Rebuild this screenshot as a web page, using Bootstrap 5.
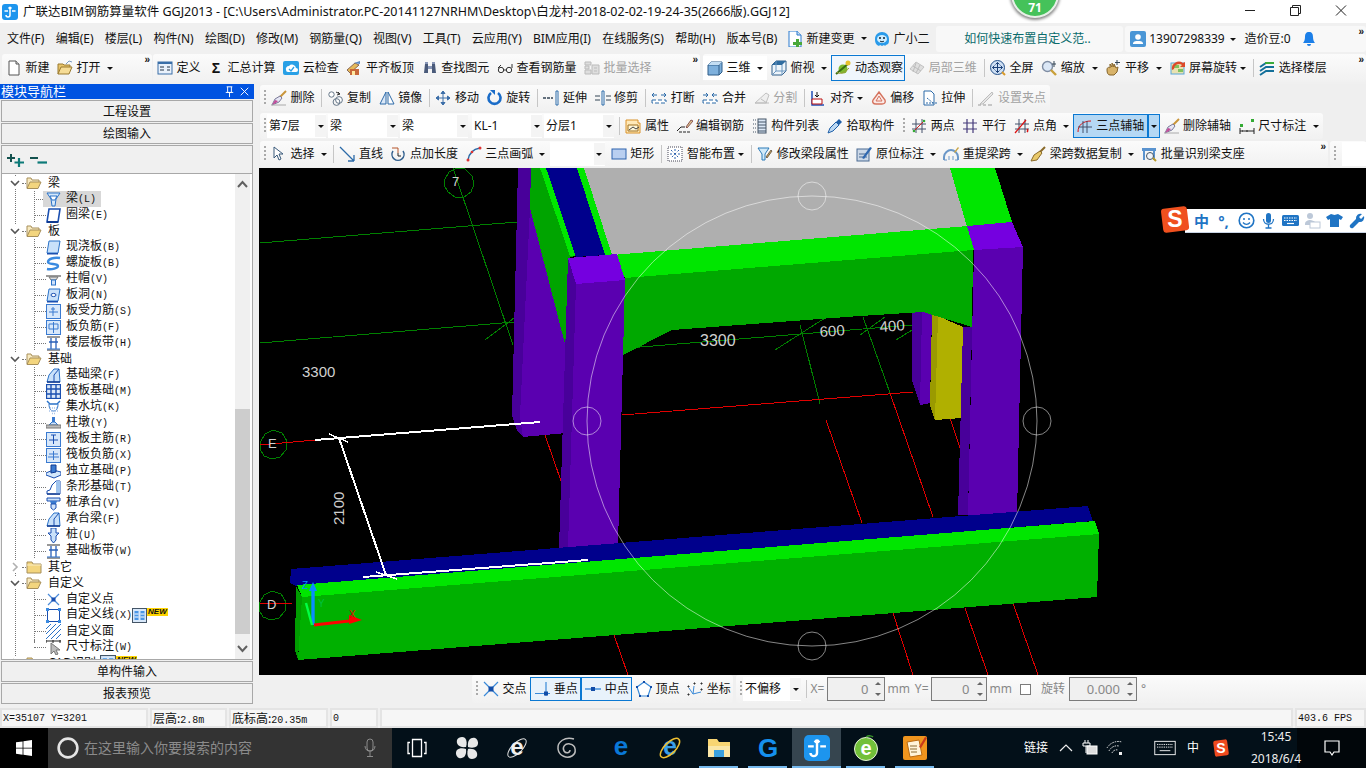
<!DOCTYPE html>
<html lang="zh">
<head>
<meta charset="UTF-8">
<title>GGJ2013</title>
<link href="https://cdn.jsdelivr.net/npm/bootstrap@5.3.0/dist/css/bootstrap.min.css" rel="stylesheet">
<style>
html,body{margin:0;width:1366px;height:768px;overflow:hidden;background:#f0f0f0}
body{font:12px/16px "Noto Sans","Noto Sans CJK SC",sans-serif;color:#111}
.app-shell{width:1366px;height:768px}
.ic{width:16px;height:16px;flex:none;display:block}
.title-row{height:23px;background:#fff;padding-left:2px;overflow:hidden}
.title-txt{margin-left:5px;white-space:nowrap;font-size:12.5px}
.win-btn{width:46px;height:23px}
.score-ball{left:1011px;top:-30px;width:48px;height:48px;border-radius:50%;background:#45c25a;border:2px solid #e8efe8;box-shadow:0 1px 3px 1px #888;color:#fff;font-weight:700;font-size:12px;padding-top:29px;text-align:center;line-height:14px}
.menu-row{height:31px;background:#f0f0f0;white-space:nowrap}
.menu-item{padding:0 5.6px}
.menu-item.first-item{padding-left:7px}
.tab-box{height:26px;background:#f8f8f8;border-radius:3px;margin-top:1px}
.tip-box{width:187px;margin-left:3px;color:#0b6c6c;padding-left:28px}
.user-box{margin-left:2px;flex:1;padding-left:5px;position:relative}
.tool-row{height:30px;background:#f0f0f0;white-space:nowrap}
.bar-row{height:28px;background:#efefef;white-space:nowrap}
.tgroup{height:26px;margin-top:1px;background:linear-gradient(#fbfbfb,#f1f1f1);border-radius:3px;position:relative}
.tool-row .tgroup{height:28px;margin-top:0}
.grp-a{width:150px;margin-left:2px}
.grp-b{width:547px;margin-left:1px}
.grp-c{margin-left:3px}
.gr-edit{width:790px}
.gr-attr{width:1063px}
.gr-draw{width:1068px}
.gr-tail{width:36px;margin-left:2px}
.tail-white{width:24px;height:24px;background:#fff;margin-left:5px}
.tbtn{padding:0 3.8px;gap:3.6px;height:100%;flex:none}
.tbtn.off{color:#a2a2a2}
.tbtn.on{background:#b5d8f4;border:1px solid #0a78d2;padding:0 3px;height:24px;width:75px}
.tool-row .tbtn.on{height:26px;width:74px;background:#f0f6fc}
.tbtn.tri-on{width:12px;padding:0 2px}
.seg-white{background:#fff;height:24px;align-items:center;display:flex}
.tri{width:0;height:0;border:3px solid transparent;border-top:3.5px solid #111;border-bottom:0;flex:none;display:block}
.tri-wrap{padding:0 3.4px 0 2.4px;flex:none}
.tool-row .tri-wrap,.tri-near{padding:0 4px 0 3px}
.tri-near{margin-left:-4px}
.more{position:absolute;right:3px;top:1px;font:700 10px/10px "Liberation Sans",sans-serif;letter-spacing:-1px}
.tsep{width:1px;height:18px;background:#c6c6c6;margin:0 1.5px 0 3px;flex:none}
.tgrip{width:2px;height:16px;margin:0 1px 0 4px;flex:none;background:repeating-linear-gradient(#aaa 0 2px,transparent 2px 4px)}
.tgrip-mid{margin:0 2px 0 5px}
.combo-box{height:24px;background:#fff;margin-right:2px;flex:none}
.combo-arrow{width:11px;background:#f4f4f4;height:22px;flex:none}
.cw59{width:59px}.cw70{width:70px}.cw68{width:68px;margin-right:4px}.cw55{width:55px;margin-left:1px}.cw58{width:58px}
.combo-txt{padding-left:2px}
.nav-panel{width:254px;background:#f0f0f0}
.nav-head{height:15px;background:#0053e1;color:#fff;font-size:13px;line-height:15px;padding-left:1px}
.nav-btn{height:22px;background:#f0f0f0;border:1px solid #a8a8a8;text-align:center;line-height:22px;margin:1px 1px 0 1px;font-size:12px}
.nav-low{height:21px;line-height:20px}
.nav-tools{height:28px;background:#f0f0f0;border:1px solid #a8a8a8;border-bottom:0;margin:1px 1px 0;padding-left:5px;gap:5px}
.tree-wrap{height:487px;background:#fff;border:1px solid #a8a8a8;margin:0 1px;overflow:hidden}
.tree-list{width:232px;padding-top:1px}
.tnode{height:16px;white-space:nowrap;background-repeat:repeat-y;background-size:1px 2px;background-image:linear-gradient(#777 50%,transparent 50%);background-position:13px 0}
.tfold{padding-left:7px}
.tfold .chev{width:12px;height:12px;flex:none;margin-right:1px;background:#fff}
.tfold .dots{width:4px;border-top:1px dotted #777;flex:none}
.tfold .lbl{margin-left:6px}
.tkid{padding-left:32px;background-image:linear-gradient(#777 50%,transparent 50%),linear-gradient(#777 50%,transparent 50%);background-position:13px 0,32px 0;background-size:1px 2px,1px 2px}
.tkid-end{background-size:1px 2px,1px 9px;background-repeat:repeat-y,no-repeat}
.tkid .dots{width:12px;border-top:1px dotted #777;flex:none}
.tkid .ic{width:15px;height:15px}
.lbl{margin-left:5px}
.lbl i{font:10px/16px "Liberation Mono",monospace}
.new-tag{font:italic 700 8px/8px "Liberation Sans",sans-serif;background:#ffd400;color:#111;padding:0 1px;align-self:flex-start;margin-top:1px}
.sel-dots{width:9px !important}
.sel-wrap{background:#d8d8d8;padding-left:3px;padding-right:5px;height:16px}
.scroll-track{width:15px;background:#f0f0f0;margin-right:2px}
.scroll-thumb{height:225px;background:#cdcdcd;margin-top:215px}
.scroll-end{height:20px}
.work-col{padding-left:5px;min-width:0}
.work-bars{padding-left:1px}
.view-wrap{height:507px;background:#000;overflow:hidden}
.view-svg{display:block;width:1107px;height:507px}
.ime-bar{left:901px;top:38px;height:27px}
.ime-logo{width:30px;height:27px;display:block;flex:none;position:relative;z-index:1}
.ime-body{height:24px;background:#fff;width:181px;margin-top:3px;margin-left:-5px;border-bottom:1px solid #c8d4e4;color:#1f74c4;padding-left:9px;gap:5px}
.ime-body b{font-size:15px;line-height:20px}
.ime-body .ime-comma{width:19px;text-align:center}
.ime-body .ic{width:17px;height:17px}
.snap-row{height:30px;background:#f0f0f0;padding-left:213px;white-space:nowrap}
.snap-a{height:28px;margin-top:0;width:261px;flex:none}
.snap-b{height:28px;margin-top:0;margin-left:3px}
.tbtn.snap-on{background:#e8f2fb;border:1px solid #0a78d2;height:24px;padding:0 3px;width:51px}
.num-box{height:24px;border:1px solid #7b7b7b;background:#f0f0f0;color:#888;text-align:right;padding-right:16px;position:relative;line-height:22px;font-size:13px;flex:none}
.nb58{width:58px}.nb56{width:56px}.nb68{width:68px}
.spin-up,.spin-dn{position:absolute;right:3px;width:0;height:0;border:3px solid transparent}
.spin-up{top:4px;border-bottom:3px solid #666;border-top:0}
.spin-dn{bottom:4px;border-top:3px solid #666;border-bottom:0}
.gray-txt{color:#888}
.chk-box{width:11px;height:11px;border:1px solid #7b7b7b;background:#fff;flex:none}
.ml2{margin-left:2px}.ml3{margin-left:3px}.ml4{margin-left:4px}.ml5{margin-left:5px}.ml8{margin-left:8px}.ml10{margin-left:10px}
.stat-row{height:20px;margin-top:3px;background:#f0f0f0;gap:2px}
.stat-cell{height:20px;border:2px solid #e4e4e4;background:#f6f6f6;padding-left:1px;white-space:nowrap;font:10px/17px "Liberation Mono",monospace}
.stat-cell span{font:12px/16px "Noto Sans CJK SC",sans-serif}
.sc1{width:148px}.sc2{width:77px}.sc3{width:99px}.sc4{width:48px}.sc5{flex:1}.sc6{width:71px}
.task-row{height:40px;background:#031019;color:#fff}
.start-btn{width:48px;background:#000}
.search-box{width:344px;background:#333;color:#8b8b8b;font-size:14px;padding-left:9px}
.search-txt{margin-left:5px}
.tb-slot{width:49px;height:40px;position:relative}
.tb-wide{width:50px}
.tb-gap{margin-left:4px}
.tb-slot .ic{width:26px;height:26px;overflow:visible}
.tb-slot.run::after{content:"";position:absolute;left:5px;right:5px;bottom:0;height:2px;background:#76b9ed}
.tb-slot.act{background:#36454f}
.tb-slot.act::after{left:0;right:0}
.tray-ic{width:18px;height:18px;display:block;flex:none}
.mr6{margin-right:6px}.mr7{margin-right:7px}.mr9{margin-right:9px}.mr11{margin-right:11px}.mr13{margin-right:13px}.mr16{margin-right:16px}.mr30{margin-right:30px}
.clock-box{width:60px;text-align:center;line-height:22px;font-size:12px;color:#eee;margin-right:-9px;position:relative;z-index:1}
.note-box{width:69px;background:#01060a;height:40px}
.sig-mark{width:16px;text-align:center;font:700 14px/16px "Liberation Sans",sans-serif}
</style>
</head>
<body>
<svg width="0" height="0" class="position-absolute">
<defs>
<symbol id="i-new" viewBox="0 0 16 16"><path d="M3 1h7l3 3v11H3z" fill="#fff" stroke="#555"/><path d="M10 1v3h3" fill="#ddd" stroke="#555"/></symbol>
<symbol id="i-open" viewBox="0 0 16 16"><path d="M1 14V4h5l1 1h6v2" fill="#e8c46a" stroke="#9a7a30"/><path d="M1 14l3-7h11l-3 7z" fill="#f6dc96" stroke="#9a7a30"/><path d="M9 4l3-3 3 1" fill="none" stroke="#7a9ac0"/></symbol>
<symbol id="i-def" viewBox="0 0 16 16"><rect x="1" y="2" width="14" height="12" fill="#e9f1fb" stroke="#3a6fa8"/><rect x="1" y="2" width="14" height="2" fill="#3a6fa8"/><path d="M3 7h4M3 10h4M10 7h3M10 10h3" stroke="#234" /></symbol>
<symbol id="i-cloud" viewBox="0 0 16 16"><rect x="0" y="1" width="16" height="14" rx="2" fill="#29a0e6"/><path d="M3 10a3 3 0 0 1 3-4 4 4 0 0 1 7 2 2 2 0 0 1 0 4H5a2 2 0 0 1-2-2z" fill="#fff"/><path d="M6 9l2 2 3-4" stroke="#29a0e6" fill="none" stroke-width="1.3"/></symbol>
<symbol id="i-flat" viewBox="0 0 16 16"><path d="M1 10l8-7 4 2-9 8z" fill="#e5b95a" stroke="#865"/><path d="M4 9h9v6H4z" fill="#c8683a"/><path d="M6 11h3v4H6z" fill="#ffe9a0"/><path d="M8 3l6-2v3z" fill="#5b8ac8"/></symbol>
<symbol id="i-binoc" viewBox="0 0 16 16"><path d="M2 13l1-9h3v9zM10 13V4h3l1 9z" fill="#4a5a7a"/><rect x="6" y="6" width="4" height="3" fill="#8a98b8"/><path d="M3 2h3v2H3zM10 2h3v2h-3z" fill="#8a98b8"/></symbol>
<symbol id="i-glass" viewBox="0 0 16 16"><circle cx="4" cy="10" r="2.7" fill="none" stroke="#333"/><circle cx="12" cy="10" r="2.7" fill="none" stroke="#333"/><path d="M6 10h3M1 8l3-3M15 8V4" stroke="#333" fill="none"/></symbol>
<symbol id="i-batch" viewBox="0 0 16 16"><path d="M1 2h6v3H1zM1 6h4v3H1zM1 10h6v4H1zM8 5h7v9H8z" fill="#dedede" stroke="#bbb"/><path d="M10 8h3M10 11h3" stroke="#bbb"/></symbol>
<symbol id="i-cube" viewBox="0 0 16 16"><path d="M1 5l3-3h11v10l-3 3H1z" fill="#7eb0dc" stroke="#2f5c88"/><path d="M1 5h11v10M12 5l3-3" fill="none" stroke="#2f5c88"/><path d="M1 5l3-3h11l-3 3z" fill="#c4def3"/></symbol>
<symbol id="i-cube2" viewBox="0 0 16 16"><path d="M1 5l4-4h10v10l-4 4H1z" fill="#eef5fb" stroke="#2f5c88"/><path d="M1 5l4-4h10l-4 4z" fill="#2f6ca0"/><path d="M11 5v10M5 1v10h10M5 11l-4 4" fill="none" stroke="#6a96bf"/></symbol>
<symbol id="i-orbit" viewBox="0 0 16 16"><circle cx="8" cy="9" r="4.5" fill="#7ebb2e"/><path d="M1 14L14 3" stroke="#3a6e12" stroke-width="2"/><circle cx="13" cy="3" r="2.5" fill="#e6c22e"/><path d="M2 12c2 3 8 1 12-4" stroke="#9b9b3a" fill="none"/></symbol>
<symbol id="i-part" viewBox="0 0 16 16"><path d="M1 9l6-7 8 5-6 7z" fill="#dedede" stroke="#c2c2c2"/><path d="M4 6l8 5M7 3l-3 9M11 5l-4 8" stroke="#bdbdbd"/></symbol>
<symbol id="i-full" viewBox="0 0 16 16"><circle cx="7.5" cy="7.5" r="7" fill="#cfe0f4" stroke="#24518a"/><path d="M7.5 2.5v10M2.5 7.5h10M7.5 2.5l-2 2M7.5 2.5l2 2M7.5 12.5l-2-2M7.5 12.5l2-2M2.5 7.5l2-2M2.5 7.5l2 2M12.5 7.5l-2-2M12.5 7.5l-2 2" stroke="#1a3f77" fill="none"/><path d="M12 12l3 3" stroke="#d99a2a" stroke-width="2"/></symbol>
<symbol id="i-zoom" viewBox="0 0 16 16"><circle cx="6.5" cy="6.5" r="5" fill="#dbe7f6" stroke="#7f8da3" stroke-width="1.4"/><path d="M10 10l5 5" stroke="#c9a03a" stroke-width="2.4"/><path d="M13 1v6M11 4h4" stroke="#345" /></symbol>
<symbol id="i-pan" viewBox="0 0 16 16"><path d="M2 10c0-3 2-3 3-2V4l2 3V3l2 4V4l2 4 2-1-1 5-3 3H5c-2 0-3-2-3-5z" fill="#d8b36a" stroke="#85642a"/><path d="M12 0v5M10 2.5h5" stroke="#345"/></symbol>
<symbol id="i-rot" viewBox="0 0 16 16"><rect x="1" y="3" width="13" height="11" fill="#e9e2b0" stroke="#5aa6d8"/><path d="M3 5h6v3H3zM8 9h5v3H8z" fill="#82c25c"/><path d="M2 10a7 7 0 0 1 11-7l2-1v5h-5l2-2a5 5 0 0 0-8 4" fill="#dd4a2a"/></symbol>
<symbol id="i-floor" viewBox="0 0 16 16"><path d="M1 7l6-4h8M1 11l6-4h8M1 15l6-4h8" fill="none" stroke="#14709a" stroke-width="2"/><path d="M6 3h9" stroke="#3bab3b" stroke-width="2"/></symbol>
<symbol id="i-broom" viewBox="0 0 16 16"><path d="M15 1L8 8" stroke="#c9953a" stroke-width="2"/><path d="M9 6l2 2-3 4-7 3 3-6z" fill="#e6e6f4" stroke="#7a7a9a"/><path d="M1 15l4-2 2-2-3-1z" fill="#c34c9a"/><path d="M0 15h15" stroke="#aaa"/></symbol>
<symbol id="i-copy" viewBox="0 0 16 16"><circle cx="3.5" cy="4.5" r="2.7" fill="#fff" stroke="#678"/><circle cx="11" cy="10" r="3.4" fill="#fff" stroke="#678"/><circle cx="8.5" cy="12" r="3.4" fill="none" stroke="#678"/><path d="M8 2l4 2M12 4l-2-2M12 4l-3 1" stroke="#333" fill="none"/></symbol>
<symbol id="i-mirror" viewBox="0 0 16 16"><path d="M7 2L1 14h6z" fill="#dbe8f7" stroke="#2d6aa8"/><path d="M9 2l6 12H9z" fill="#fff" stroke="#2d6aa8"/></symbol>
<symbol id="i-move" viewBox="0 0 16 16"><path d="M8 1v14M1 8h14M8 1L6 3.5h4zM8 15l-2-2.5h4zM1 8l2.5-2v4zM15 8l-2.5-2v4z" stroke="#3c6ea8" fill="#3c6ea8"/></symbol>
<symbol id="i-turn" viewBox="0 0 16 16"><path d="M4 3a6 6 0 1 0 7 0" fill="none" stroke="#1a6cc8" stroke-width="2.6"/><path d="M3 0h5v5z" fill="#1a6cc8"/></symbol>
<symbol id="i-ext" viewBox="0 0 16 16"><path d="M0 8h10" stroke="#345" stroke-width="1.5" stroke-dasharray="3 1"/><path d="M13 1h2v14h-2z" fill="#fff" stroke="#2b6aa8"/></symbol>
<symbol id="i-trim" viewBox="0 0 16 16"><path d="M7 1h2v14H7z" fill="#fff" stroke="#2b6aa8"/><path d="M0 6h5M0 10h5M11 6h5M11 10h5" stroke="#345"/></symbol>
<symbol id="i-brk" viewBox="0 0 16 16"><path d="M1 5h5M10 5h5M3 3L1 5l2 2M13 3l2 2-2 2" stroke="#2b6aa8" fill="none"/><path d="M1 10h14v3H1z" fill="#fff" stroke="#2b6aa8" stroke-dasharray="4 2"/></symbol>
<symbol id="i-mrg" viewBox="0 0 16 16"><path d="M1 5h5M10 5h5M4 3l2 2-2 2M12 3l-2 2 2 2" stroke="#2b6aa8" fill="none"/><path d="M1 10h14v3H1z" fill="#fff" stroke="#2b6aa8" stroke-dasharray="4 2"/></symbol>
<symbol id="i-spl" viewBox="0 0 16 16"><path d="M1 13L12 3l3 2-3 8z" fill="#eee" stroke="#c0c0c0"/><path d="M1 13h14M7 9l6 4" stroke="#bcbcbc"/></symbol>
<symbol id="i-aln" viewBox="0 0 16 16"><path d="M2 1v14h12" stroke="#2050b8" fill="none" stroke-width="1.5"/><path d="M2 9h10v5H2z" fill="#fff" stroke="#b11"/><path d="M7 2v5M5 5l2 2 2-2" stroke="#111" fill="none"/></symbol>
<symbol id="i-off" viewBox="0 0 16 16"><path d="M8 2l6 8c1 3-1 4-3 4H5c-3 0-4-2-3-4z" fill="#fbe9e6" stroke="#d5735e" stroke-width="1.4"/><path d="M8 6l3 5H5z" fill="none" stroke="#d5735e"/></symbol>
<symbol id="i-str" viewBox="0 0 16 16"><path d="M2 1h7l3 3v11H2z" fill="#fff" stroke="#2d6aa8"/><path d="M5 8l6 5M4 13h11" stroke="#2d6aa8" stroke-dasharray="2 1"/></symbol>
<symbol id="i-grip" viewBox="0 0 16 16"><path d="M2 14l9-9 3-3 1 2-10 10z" fill="#e6e6e6" stroke="#bcbcbc"/><path d="M0 15h3M5 15h3M10 15h4" stroke="#999"/></symbol>
<symbol id="i-prop" viewBox="0 0 16 16"><path d="M1 2h12v3h2v10H1z" fill="#ffe9b8" stroke="#d9922a"/><path d="M3 7h10v6H3z" fill="#fff7d8" stroke="#a07020"/><path d="M4 12l4-3 3 2 3-2" stroke="#444" fill="none"/></symbol>
<symbol id="i-edit" viewBox="0 0 16 16"><path d="M0 13l4-4h4" stroke="#222" fill="none"/><path d="M9 9l5-7 2 1-6 7z" fill="#e1c58a" stroke="#855"/><path d="M2 14h12" stroke="#222" stroke-dasharray="3 1"/></symbol>
<symbol id="i-list" viewBox="0 0 16 16"><rect x="6" y="1" width="8" height="14" fill="#dbe8f7" stroke="#456"/><path d="M6 4h8M6 7h8M6 10h8M6 13h8" stroke="#456"/><path d="M1 2h3M1 6h3M1 10h3M1 14h3" stroke="#456" stroke-dasharray="1 1"/></symbol>
<symbol id="i-pick" viewBox="0 0 16 16"><path d="M1 15l2-5 6-6 3 3-6 6z" fill="#bcd8f2" stroke="#1f5fa8"/><path d="M9 4l3-3 3 3-3 3z" fill="#1f5fa8"/></symbol>
<symbol id="i-two" viewBox="0 0 16 16"><path d="M5 1v14M11 1v14M1 6h14M1 11h14" stroke="#44506a"/><path d="M2 14L14 2" stroke="#c22"/><circle cx="3" cy="13" r="1.3" fill="#3a3"/><circle cx="13" cy="3" r="1.3" fill="#3a3"/></symbol>
<symbol id="i-par" viewBox="0 0 16 16"><path d="M5 1v14M11 1v14M1 5h14M1 11h14" stroke="#443a7a" stroke-width="1.2"/></symbol>
<symbol id="i-ang" viewBox="0 0 16 16"><path d="M5 1v14M11 1v14M1 6h14M1 11h14" stroke="#44506a"/><path d="M1 15L12 2" stroke="#d11" stroke-width="1.2"/><path d="M13 11a2 2 0 0 1 0 3" stroke="#d11" fill="none" stroke-width="1.5"/></symbol>
<symbol id="i-aux" viewBox="0 0 16 16"><path d="M1 14c0-7 5-11 13-11" stroke="#d11" fill="none"/><path d="M6 3v12M10 3v12M1 9h14" stroke="#44506a"/></symbol>
<symbol id="i-dim" viewBox="0 0 16 16"><path d="M1 13h14M1 10v6M15 10v6" stroke="#222"/><rect x="1" y="6" width="3" height="3" fill="#3a3"/><rect x="12" y="1" width="3" height="3" fill="#3a3"/><path d="M3 13h1M7 13h2" stroke="#222"/></symbol>
<symbol id="i-arrow" viewBox="0 0 16 16"><path d="M3 1v11l3-3 2 5 2-1-2-5h4z" fill="#fff" stroke="#3a5a7a"/></symbol>
<symbol id="i-line" viewBox="0 0 16 16"><path d="M1 1l14 14M15 15V9M15 15H9" stroke="#2b6aa8" fill="none" stroke-width="1.3"/></symbol>
<symbol id="i-plus" viewBox="0 0 16 16"><path d="M3 5a6 6 0 1 0 10 0" fill="none" stroke="#32608f" stroke-width="1.5"/><path d="M2 2h6v5" fill="none" stroke="#b5552a"/><path d="M8 7v3h3" stroke="#222" fill="none"/></symbol>
<symbol id="i-arc" viewBox="0 0 16 16"><path d="M2 14C3 7 8 3 14 2" stroke="#2b6aa8" fill="none" stroke-width="1.5"/><circle cx="2" cy="14" r="1.5" fill="#d33"/><circle cx="14" cy="2" r="1.5" fill="#d33"/><circle cx="6" cy="6" r="1.3" fill="#d33"/></symbol>
<symbol id="i-rect" viewBox="0 0 16 16"><rect x="1" y="3" width="14" height="10" fill="#b9cff0" stroke="#2d62ad"/></symbol>
<symbol id="i-smart" viewBox="0 0 16 16"><rect x="1" y="1" width="14" height="14" fill="#fff" stroke="#445" stroke-dasharray="1 1"/><path d="M8 3v10M3 8h10M4 4l8 8M12 4l-8 8" stroke="#2d62ad" stroke-dasharray="2 2"/></symbol>
<symbol id="i-funnel" viewBox="0 0 16 16"><path d="M1 2h11L8 8v6H5V8z" fill="#d2eaf9" stroke="#2b7ab8"/><path d="M9 11l5-7 1 1-5 7z" fill="#c9a648" stroke="#765"/></symbol>
<symbol id="i-insitu" viewBox="0 0 16 16"><rect x="1" y="3" width="12" height="12" fill="#cdd9e8" stroke="#4a6a92"/><path d="M3 8h8M3 11h8" stroke="#4a6a92"/><path d="M6 12L14 1l2 1-8 11z" fill="#3068b0"/></symbol>
<symbol id="i-redo" viewBox="0 0 16 16"><path d="M1 14v-3C1 7 5 4 8 4s7 3 7 7v3" stroke="#6a97c8" stroke-width="2" fill="none"/><path d="M1 14h3M12 14h3M6 14V10M10 14v-4" stroke="#6a97c8"/><path d="M11 6l4-5 1 1-4 5z" fill="#c9a648"/></symbol>
<symbol id="i-brush" viewBox="0 0 16 16"><path d="M15 1l-6 6" stroke="#8a6a2a" stroke-width="2"/><path d="M10 5l2 2-5 7-6 1 3-6z" fill="#e9c96a" stroke="#8a6a2a"/></symbol>
<symbol id="i-batid" viewBox="0 0 16 16"><path d="M1 2h14v3H1z" fill="#5a93cf"/><path d="M3 5v9M13 5v9" stroke="#5a93cf" stroke-width="2"/><circle cx="9" cy="10" r="3.5" fill="#f0f4fa" stroke="#456"/><path d="M12 12l3 3" stroke="#b99a2a" stroke-width="2"/></symbol>
<symbol id="i-x" viewBox="0 0 16 16"><path d="M1 1l14 14M15 1L1 15" stroke="#3a8ad8" stroke-width="1.2"/><rect x="5.5" y="5.5" width="5" height="5" fill="#124da8"/></symbol>
<symbol id="i-perp" viewBox="0 0 16 16"><path d="M12 1v14M1 12.500h15" stroke="#3a8ad8" stroke-width="1.2"/><rect x="10" y="10.500" width="4" height="4" fill="#124da8"/></symbol>
<symbol id="i-midp" viewBox="0 0 16 16"><path d="M0 8h16" stroke="#3a8ad8" stroke-width="1.4"/><rect x="6" y="6" width="4" height="4" fill="#124da8"/></symbol>
<symbol id="i-pent" viewBox="0 0 16 16"><path d="M8 1l7 5-3 9H4L1 6z" fill="#fff" stroke="#3a8ad8" stroke-width="1.2"/><path d="M7 0h2v2H7zM0 5h2v2H0zM14 5h2v2h-2zM3 14h2v2H3zM11 14h2v2h-2z" fill="#124da8"/></symbol>
<symbol id="i-coord" viewBox="0 0 16 16"><path d="M6 13l1-8M6 13l8-2M6 13l-4-6" stroke="#3a8ad8" fill="none"/><path d="M14 2h1v1h-1zM7 2h1v1H7zM1 5h1v1H1zM1 13h1v1H1zM14 8h1v1h-1z" stroke="#222" fill="none"/></symbol>
<symbol id="i-change" viewBox="0 0 16 16"><path d="M2 0h8l4 4v12H2z" fill="#fff" stroke="#2b7ad0"/><path d="M10 0v4h4" fill="#cde" stroke="#2b7ad0"/><path d="M9 8h3v3h3v3h-3v2H9v-2H6v-3h3z" fill="#49a83a"/></symbol>
<symbol id="i-blob" viewBox="0 0 16 16"><path d="M1 8c0-4 3-7 7-7s7 3 7 7c0 2 0 4-1 5l-2 1-1 1-1-1-2 1-2-1-1 1-2-1C1 12 1 10 1 8z" fill="#2a9bea"/><ellipse cx="8" cy="8" rx="5" ry="4" fill="#cfeeff"/><circle cx="6" cy="7" r="1" fill="#123"/><circle cx="10" cy="7" r="1" fill="#123"/><path d="M6 10c1 1 3 1 4 0" stroke="#123" fill="none"/></symbol>
<symbol id="i-user" viewBox="0 0 16 16"><rect width="16" height="16" rx="2" fill="#4a96d6"/><circle cx="8" cy="6" r="2.8" fill="#fff"/><path d="M3 13h10v-1c-1-2-3-2-5-2s-4 0-5 2z" fill="#fff"/></symbol>
<symbol id="i-bell" viewBox="0 0 16 16"><path d="M8 1c3 0 4 2 4 5 0 3 1 5 2 6H2c1-1 2-3 2-6 0-3 1-5 4-5z" fill="#1c7fe8"/><path d="M6 13h4a2 2 0 0 1-4 0z" fill="#1c7fe8"/></symbol>
<symbol id="i-app" viewBox="0 0 16 16"><rect width="16" height="16" rx="3" fill="#1d95ee"/><path d="M8 3v8a2 2 0 0 1-4 0M2.5 7H6M10 7h3.5M8 3l-1.5 1.5M8 3l1.5 1.5" stroke="#fff" stroke-width="1.5" fill="none"/></symbol>
<symbol id="t-beam" viewBox="0 0 15 15"><path d="M1 1h13l-4 6-1 7H6L5 7z" fill="#d4e8fb" stroke="#2a72c8"/><path d="M4 4h7l-2 4H6z" fill="#fff" stroke="#2a72c8"/></symbol>
<symbol id="t-ring" viewBox="0 0 15 15"><path d="M3 1h11l-2 13H1z" fill="#fff" stroke="#1a4fb0" stroke-width="1.6"/><path d="M1 14h11" stroke="#103a90" stroke-width="2"/></symbol>
<symbol id="t-slab" viewBox="0 0 15 15"><path d="M3 1h11l-2 12H1z" fill="#c9e1fa" stroke="#2a72c8"/><path d="M1 13h11v1.5H1z" fill="#1a4fb0"/></symbol>
<symbol id="t-spiral" viewBox="0 0 15 15"><path d="M14 2C8 1 2 3 2 6c0 3 10 1 10 4 0 2-6 4-11 3" fill="none" stroke="#3a8ae0" stroke-width="2.4"/></symbol>
<symbol id="t-cap" viewBox="0 0 15 15"><path d="M0 3h15v2H0z" fill="#9a9a9a"/><path d="M3 5h9l-2 3H5z" fill="#ddd" stroke="#777"/><rect x="5.5" y="8" width="4" height="5" fill="#cfe2fb" stroke="#2a72c8"/></symbol>
<symbol id="t-hole" viewBox="0 0 15 15"><path d="M3 1h11l-2 12H1z" fill="#c9e1fa" stroke="#2a72c8"/><ellipse cx="7.5" cy="7" rx="2.5" ry="1.6" fill="#fff" stroke="#1a4fb0"/><path d="M1 13h11v1.5H1z" fill="#1a4fb0"/></symbol>
<symbol id="t-reb" viewBox="0 0 15 15"><rect x=".5" y=".5" width="14" height="14" fill="#d8e8fa" stroke="#3a7ad0"/><path d="M7 3v9M3 8h9M5 5h4" stroke="#3a7ad0" fill="none"/></symbol>
<symbol id="t-neg" viewBox="0 0 15 15"><rect x=".5" y=".5" width="14" height="14" fill="#d8e8fa" stroke="#3a7ad0"/><path d="M3 4h9v5H3zM7.5 2v11" stroke="#3a7ad0" fill="none"/></symbol>
<symbol id="t-band" viewBox="0 0 15 15"><path d="M1 1h13M1 14h13" stroke="#777" stroke-width="1.4"/><path d="M5 2v11M10 2v11M3 6h9" stroke="#2a60b8" stroke-width="1.3"/><path d="M1 12h13v2H1z" fill="#3a7ad0" opacity=".55"/></symbol>
<symbol id="t-fbeam" viewBox="0 0 15 15"><path d="M1 14l2-7 5-6h5l1 13z" fill="#c9e1fa" stroke="#2a72c8"/><path d="M8 14V7l5-6" stroke="#1a4fb0" fill="none"/><path d="M1 14h13" stroke="#103a90" stroke-width="1.5"/></symbol>
<symbol id="t-raft" viewBox="0 0 15 15"><rect x=".5" y=".5" width="14" height="14" fill="#dce9f9" stroke="#1a4fb0" stroke-width="1.3"/><path d="M5 1v13M10 1v13M1 5h13M1 10h13" stroke="#1a4fb0" stroke-width="1.4"/></symbol>
<symbol id="t-pit" viewBox="0 0 15 15"><path d="M1 1l3 3h7l3-3" stroke="#2a72c8" fill="none" stroke-width="1.4"/><path d="M3 4c0 5 2 7 4.500 7S12 9 12 4" fill="none" stroke="#2a72c8"/><path d="M4 8h7M3 11h9M6 13.500h3" stroke="#a8c4ea" stroke-dasharray="1 1" stroke-width="1.5"/></symbol>
<symbol id="t-pier" viewBox="0 0 15 15"><rect x="6" y="1" width="3" height="5" fill="#3a7ad0"/><path d="M3 9l3-3h3l3 3z" fill="#cfe2fb" stroke="#2a72c8"/><path d="M0 9h15v3H0z" fill="#bbb" stroke="#777"/></symbol>
<symbol id="t-main" viewBox="0 0 15 15"><rect x=".5" y=".5" width="14" height="14" fill="#d8e8fa" stroke="#3a7ad0"/><path d="M3 8h9M7.500 3v9M5 3h5" stroke="#1a4fb0" fill="none"/></symbol>
<symbol id="t-rneg" viewBox="0 0 15 15"><rect x=".5" y=".5" width="14" height="14" fill="#d8e8fa" stroke="#3a7ad0"/><path d="M3 6h9M2 9h11M7.500 3v9" stroke="#3a7ad0" fill="none"/></symbol>
<symbol id="t-iso" viewBox="0 0 15 15"><path d="M0 9l7-3 8 2v3l-7 3-8-3z" fill="#d4e8fb" stroke="#1a4fb0"/><path d="M5 1h5v7l-5 1z" fill="#3a7ad0" stroke="#103a90"/></symbol>
<symbol id="t-strf" viewBox="0 0 15 15"><path d="M1 14v-3l3-1 2-5 4-4h4v13z" fill="#fff" stroke="#1a4fb0"/><path d="M10 1l4 0v13h-4V5z" fill="#9ec3ee"/><path d="M1 14h13" stroke="#103a90" stroke-width="1.4"/></symbol>
<symbol id="t-pcap" viewBox="0 0 15 15"><path d="M1 2h13v3H1z" fill="#c9e1fa" stroke="#1a4fb0"/><path d="M4 5h7l-1 3H5z" fill="#3a7ad0"/><path d="M5 8h5v4l-2.500 2L5 12z" fill="#cfe2fb" stroke="#1a4fb0"/></symbol>
<symbol id="t-pile" viewBox="0 0 15 15"><path d="M5 0h5v5h3l-3 3v4l-2.500 3L5 12V8L2 5h3z" fill="#c9e1fa" stroke="#1a4fb0"/></symbol>
<symbol id="t-cross" viewBox="0 0 15 15"><path d="M2 2l11 11M13 2L2 13" stroke="#4a8ad8" stroke-width="1.2"/><rect x="5.500" y="5.500" width="4" height="4" fill="#1a4fb0"/></symbol>
<symbol id="t-box" viewBox="0 0 15 15"><rect x="1.500" y="1.500" width="12" height="12" fill="#fff" stroke="#1a4fb0"/><path d="M0 0h3v3H0zM12 0h3v3h-3zM0 12h3v3H0zM12 12h3v3h-3z" fill="#3a8ae0"/></symbol>
<symbol id="t-hatch" viewBox="0 0 15 15"><path d="M0 5l5-5M0 10L10 0M0 15L15 0M5 15L15 5M10 15l5-5" stroke="#2a72c8"/></symbol>
<symbol id="t-dimx" viewBox="0 0 15 15"><path d="M0 1h15M0 0v3M7 0v3M14 0v3" stroke="#222"/><path d="M5 3v11l3-3 2 4 2-1-2-4h4z" fill="#bbb" stroke="#777"/></symbol>
<symbol id="t-cols" viewBox="0 0 15 15"><rect x=".5" y=".5" width="14" height="14" fill="#d8e8fa" stroke="#456"/><path d="M2.500 3h4v9h-4zM8.500 3h4v9h-4z" fill="#4a96e6"/><path d="M2.500 6h4M2.500 9h4M8.500 6h4M8.500 9h4" stroke="#fff"/></symbol>
<symbol id="fold-open" viewBox="0 0 16 16"><path d="M1 13V3h4l1 2h7v2" fill="#f8eac0" stroke="#a78f5a"/><path d="M1 13.500L4 7h11l-3 6.500z" fill="#f3d57e" stroke="#a78f5a"/></symbol>
<symbol id="fold-shut" viewBox="0 0 16 16"><path d="M1 3h5l1 2h8v9H1z" fill="#f3d57e" stroke="#a78f5a"/><path d="M1 6h14" stroke="#fbeec4"/></symbol>
<symbol id="chev-d" viewBox="0 0 12 12"><path d="M2 4l4 4 4-4" stroke="#555" stroke-width="1.6" fill="none"/></symbol>
<symbol id="chev-r" viewBox="0 0 12 12"><path d="M4 2l4 4-4 4" stroke="#b0b0b0" stroke-width="1.6" fill="none"/></symbol>
</defs>
</svg>

<div class="app-shell d-flex flex-column position-relative">

  <!-- title bar -->
  <div class="title-row d-flex align-items-center position-relative">
    <svg class="ic"><use href="#i-app"/></svg>
    <span class="title-txt flex-grow-1">广联达BIM钢筋算量软件 GGJ2013 - [C:\Users\Administrator.PC-20141127NRHM\Desktop\白龙村-2018-02-02-19-24-35(2666版).GGJ12]</span>
    <div class="score-ball position-absolute">71</div>
    <svg class="win-btn" viewBox="0 0 46 23"><path d="M17 10.500h10" stroke="#222"/></svg>
    <svg class="win-btn" viewBox="0 0 46 23"><path d="M16.500 7.500h8v8h-8zM18.500 7V5.500h8v8H25" fill="none" stroke="#222"/></svg>
    <svg class="win-btn" viewBox="0 0 46 23"><path d="M16 5.500l10 10M26 5.500l-10 10" stroke="#222"/></svg>
  </div>

  <!-- menu -->
  <div class="menu-row d-flex align-items-center">
    <span class="menu-item first-item">文件(F)</span><span class="menu-item">编辑(E)</span><span class="menu-item">楼层(L)</span><span class="menu-item">构件(N)</span><span class="menu-item">绘图(D)</span><span class="menu-item">修改(M)</span><span class="menu-item">钢筋量(Q)</span><span class="menu-item">视图(V)</span><span class="menu-item">工具(T)</span><span class="menu-item">云应用(Y)</span><span class="menu-item">BIM应用(I)</span><span class="menu-item">在线服务(S)</span><span class="menu-item">帮助(H)</span><span class="menu-item">版本号(B)</span>
    <div class="tbtn d-flex align-items-center"><svg class="ic"><use href="#i-change"/></svg><span>新建变更</span></div>
    <div class="tri-wrap"><span class="tri"></span></div>
    <div class="tbtn d-flex align-items-center"><svg class="ic"><use href="#i-blob"/></svg><span>广小二</span></div>
    <div class="tab-box tip-box d-flex align-items-center">如何快速布置自定义范..</div>
    <div class="tab-box user-box d-flex align-items-center">
      <svg class="ic"><use href="#i-user"/></svg><span class="ml3">13907298339</span>
      <div class="tri-wrap ml3"><span class="tri"></span></div>
      <span class="ml5">造价豆:0</span>
      <svg class="ic ml10"><use href="#i-bell"/></svg>
      <span class="more">»</span>
    </div>
  </div>

  <!-- main toolbar -->
  <div class="tool-row d-flex">
    <div class="tgroup grp-a d-flex align-items-center">
      <div class="tbtn d-flex align-items-center"><svg class="ic"><use href="#i-new"/></svg><span>新建</span></div>
      <div class="tbtn d-flex align-items-center"><svg class="ic"><use href="#i-open"/></svg><span>打开</span></div>
      <div class="tri-wrap"><span class="tri"></span></div>
      <span class="more">»</span>
    </div>
    <div class="tgroup grp-b d-flex align-items-center">
      <div class="tbtn d-flex align-items-center"><svg class="ic"><use href="#i-def"/></svg><span>定义</span></div>
      <div class="tbtn d-flex align-items-center"><b class="sig-mark">Σ</b><span>汇总计算</span></div>
      <div class="tbtn d-flex align-items-center"><svg class="ic"><use href="#i-cloud"/></svg><span>云检查</span></div>
      <div class="tbtn d-flex align-items-center"><svg class="ic"><use href="#i-flat"/></svg><span>平齐板顶</span></div>
      <div class="tbtn d-flex align-items-center"><svg class="ic"><use href="#i-binoc"/></svg><span>查找图元</span></div>
      <div class="tbtn d-flex align-items-center"><svg class="ic"><use href="#i-glass"/></svg><span>查看钢筋量</span></div>
      <div class="tbtn off d-flex align-items-center"><svg class="ic"><use href="#i-batch"/></svg><span>批量选择</span></div>
      <span class="more">»</span>
    </div>
    <div class="tgroup grp-c d-flex align-items-center flex-grow-1">
      <div class="tbtn seg-white"><svg class="ic"><use href="#i-cube"/></svg><span>三维</span></div>
      <div class="tri-wrap seg-white"><span class="tri"></span></div>
      <div class="tbtn d-flex align-items-center"><svg class="ic"><use href="#i-cube2"/></svg><span>俯视</span></div>
      <div class="tri-wrap"><span class="tri"></span></div>
      <div class="tbtn on d-flex align-items-center"><svg class="ic"><use href="#i-orbit"/></svg><span>动态观察</span></div>
      <div class="tbtn off d-flex align-items-center"><svg class="ic"><use href="#i-part"/></svg><span>局部三维</span></div>
      <span class="tsep"></span>
      <div class="tbtn d-flex align-items-center"><svg class="ic"><use href="#i-full"/></svg><span>全屏</span></div>
      <div class="tbtn d-flex align-items-center"><svg class="ic"><use href="#i-zoom"/></svg><span>缩放</span></div>
      <div class="tri-wrap"><span class="tri"></span></div>
      <div class="tbtn d-flex align-items-center"><svg class="ic"><use href="#i-pan"/></svg><span>平移</span></div>
      <div class="tri-wrap"><span class="tri"></span></div>
      <div class="tbtn d-flex align-items-center"><svg class="ic"><use href="#i-rot"/></svg><span>屏幕旋转</span></div>
      <div class="tri-wrap tri-near"><span class="tri"></span></div>
      <span class="tsep"></span>
      <div class="tbtn d-flex align-items-center"><svg class="ic"><use href="#i-floor"/></svg><span>选择楼层</span></div>
      <span class="more">»</span>
    </div>
  </div>

  <!-- middle -->
  <div class="d-flex">
    <div class="nav-panel d-flex flex-column">
      <div class="nav-head d-flex align-items-center justify-content-between">模块导航栏
        <svg width="34" height="15" viewBox="0 0 34 16"><path d="M6 3h6M7 3v6h4V3M5 9h8M9 9v5" stroke="#fff" fill="none"/><path d="M21 4l8 8M29 4l-8 8" stroke="#fff"/></svg>
      </div>
      <div class="nav-btn">工程设置</div>
      <div class="nav-btn nav-low">绘图输入</div>
      <div class="nav-tools d-flex align-items-center">
        <svg width="18" height="16" viewBox="0 0 18 16"><path d="M4 2v8M0 6h8" stroke="#14524f" stroke-width="2"/><path d="M12 6v9M7.500 10.500H17" stroke="#0d7a78" stroke-width="2.200"/></svg>
        <svg width="18" height="16" viewBox="0 0 18 16"><path d="M0 6h8" stroke="#14524f" stroke-width="2"/><path d="M7.500 10.500H17" stroke="#0d7a78" stroke-width="2.200"/></svg>
      </div>
      <div class="tree-wrap d-flex">
        <div class="tree-list flex-grow-1">
          <div class="tnode tfold d-flex align-items-center"><svg class="chev"><use href="#chev-d"/></svg><span class="dots"></span><svg class="ic"><use href="#fold-open"/></svg><span class="lbl">梁</span></div>
          <div class="tnode tkid d-flex align-items-center"><span class="dots sel-dots"></span><span class="sel-wrap d-flex align-items-center"><svg class="ic"><use href="#t-beam"/></svg><span class="lbl">梁<i>(L)</i></span></span></div>
          <div class="tnode tkid d-flex align-items-center"><span class="dots"></span><svg class="ic"><use href="#t-ring"/></svg><span class="lbl">圈梁<i>(E)</i></span></div>
          <div class="tnode tfold d-flex align-items-center"><svg class="chev"><use href="#chev-d"/></svg><span class="dots"></span><svg class="ic"><use href="#fold-open"/></svg><span class="lbl">板</span></div>
          <div class="tnode tkid d-flex align-items-center"><span class="dots"></span><svg class="ic"><use href="#t-slab"/></svg><span class="lbl">现浇板<i>(B)</i></span></div>
          <div class="tnode tkid d-flex align-items-center"><span class="dots"></span><svg class="ic"><use href="#t-spiral"/></svg><span class="lbl">螺旋板<i>(B)</i></span></div>
          <div class="tnode tkid d-flex align-items-center"><span class="dots"></span><svg class="ic"><use href="#t-cap"/></svg><span class="lbl">柱帽<i>(V)</i></span></div>
          <div class="tnode tkid d-flex align-items-center"><span class="dots"></span><svg class="ic"><use href="#t-hole"/></svg><span class="lbl">板洞<i>(N)</i></span></div>
          <div class="tnode tkid d-flex align-items-center"><span class="dots"></span><svg class="ic"><use href="#t-reb"/></svg><span class="lbl">板受力筋<i>(S)</i></span></div>
          <div class="tnode tkid d-flex align-items-center"><span class="dots"></span><svg class="ic"><use href="#t-neg"/></svg><span class="lbl">板负筋<i>(F)</i></span></div>
          <div class="tnode tkid d-flex align-items-center"><span class="dots"></span><svg class="ic"><use href="#t-band"/></svg><span class="lbl">楼层板带<i>(H)</i></span></div>
          <div class="tnode tfold d-flex align-items-center"><svg class="chev"><use href="#chev-d"/></svg><span class="dots"></span><svg class="ic"><use href="#fold-open"/></svg><span class="lbl">基础</span></div>
          <div class="tnode tkid d-flex align-items-center"><span class="dots"></span><svg class="ic"><use href="#t-fbeam"/></svg><span class="lbl">基础梁<i>(F)</i></span></div>
          <div class="tnode tkid d-flex align-items-center"><span class="dots"></span><svg class="ic"><use href="#t-raft"/></svg><span class="lbl">筏板基础<i>(M)</i></span></div>
          <div class="tnode tkid d-flex align-items-center"><span class="dots"></span><svg class="ic"><use href="#t-pit"/></svg><span class="lbl">集水坑<i>(K)</i></span></div>
          <div class="tnode tkid d-flex align-items-center"><span class="dots"></span><svg class="ic"><use href="#t-pier"/></svg><span class="lbl">柱墩<i>(Y)</i></span></div>
          <div class="tnode tkid d-flex align-items-center"><span class="dots"></span><svg class="ic"><use href="#t-main"/></svg><span class="lbl">筏板主筋<i>(R)</i></span></div>
          <div class="tnode tkid d-flex align-items-center"><span class="dots"></span><svg class="ic"><use href="#t-rneg"/></svg><span class="lbl">筏板负筋<i>(X)</i></span></div>
          <div class="tnode tkid d-flex align-items-center"><span class="dots"></span><svg class="ic"><use href="#t-iso"/></svg><span class="lbl">独立基础<i>(P)</i></span></div>
          <div class="tnode tkid d-flex align-items-center"><span class="dots"></span><svg class="ic"><use href="#t-strf"/></svg><span class="lbl">条形基础<i>(T)</i></span></div>
          <div class="tnode tkid d-flex align-items-center"><span class="dots"></span><svg class="ic"><use href="#t-pcap"/></svg><span class="lbl">桩承台<i>(V)</i></span></div>
          <div class="tnode tkid d-flex align-items-center"><span class="dots"></span><svg class="ic"><use href="#t-fbeam"/></svg><span class="lbl">承台梁<i>(F)</i></span></div>
          <div class="tnode tkid d-flex align-items-center"><span class="dots"></span><svg class="ic"><use href="#t-pile"/></svg><span class="lbl">桩<i>(U)</i></span></div>
          <div class="tnode tkid d-flex align-items-center"><span class="dots"></span><svg class="ic"><use href="#t-band"/></svg><span class="lbl">基础板带<i>(W)</i></span></div>
          <div class="tnode tfold d-flex align-items-center"><svg class="chev"><use href="#chev-r"/></svg><span class="dots"></span><svg class="ic"><use href="#fold-shut"/></svg><span class="lbl">其它</span></div>
          <div class="tnode tfold d-flex align-items-center"><svg class="chev"><use href="#chev-d"/></svg><span class="dots"></span><svg class="ic"><use href="#fold-open"/></svg><span class="lbl">自定义</span></div>
          <div class="tnode tkid d-flex align-items-center"><span class="dots"></span><svg class="ic"><use href="#t-cross"/></svg><span class="lbl">自定义点</span></div>
          <div class="tnode tkid d-flex align-items-center"><span class="dots"></span><svg class="ic"><use href="#t-box"/></svg><span class="lbl">自定义线<i>(X)</i></span><svg class="ic ms-0"><use href="#t-cols"/></svg><span class="new-tag">NEW</span></div>
          <div class="tnode tkid d-flex align-items-center"><span class="dots"></span><svg class="ic"><use href="#t-hatch"/></svg><span class="lbl">自定义面</span></div>
          <div class="tnode tkid tkid-end d-flex align-items-center"><span class="dots"></span><svg class="ic"><use href="#t-dimx"/></svg><span class="lbl">尺寸标注<i>(W)</i></span></div>
          <div class="tnode tfold d-flex align-items-center"><svg class="chev"><use href="#chev-r"/></svg><span class="dots"></span><svg class="ic"><use href="#fold-shut"/></svg><span class="lbl">CAD识别</span><svg class="ic ml4"><use href="#t-cols"/></svg><span class="new-tag">NEW</span></div>
        </div>
        <div class="scroll-track d-flex flex-column">
          <div class="scroll-end d-flex align-items-center justify-content-center"><svg width="11" height="8" viewBox="0 0 11 8"><path d="M1 7l4.500-5L10 7" stroke="#606060" stroke-width="2" fill="none"/></svg></div>
          <div class="scroll-thumb"></div>
          <div class="scroll-end mt-auto d-flex align-items-center justify-content-center"><svg width="11" height="8" viewBox="0 0 11 8"><path d="M1 1l4.500 5L10 1" stroke="#606060" stroke-width="2" fill="none"/></svg></div>
        </div>
      </div>
      <div class="nav-btn nav-low">单构件输入</div>
      <div class="nav-btn nav-low">报表预览</div>
    </div>

    <div class="work-col flex-grow-1">
      <div class="bar-row d-flex work-bars">
        <div class="tgroup d-flex align-items-center gr-edit">
          <span class="tgrip"></span>
          <div class="tbtn d-flex align-items-center"><svg class="ic"><use href="#i-broom"/></svg><span>删除</span></div><span class="tsep"></span>
          <div class="tbtn d-flex align-items-center"><svg class="ic"><use href="#i-copy"/></svg><span>复制</span></div>
          <div class="tbtn d-flex align-items-center"><svg class="ic"><use href="#i-mirror"/></svg><span>镜像</span></div><span class="tsep"></span>
          <div class="tbtn d-flex align-items-center"><svg class="ic"><use href="#i-move"/></svg><span>移动</span></div>
          <div class="tbtn d-flex align-items-center"><svg class="ic"><use href="#i-turn"/></svg><span>旋转</span></div><span class="tsep"></span>
          <div class="tbtn d-flex align-items-center"><svg class="ic"><use href="#i-ext"/></svg><span>延伸</span></div>
          <div class="tbtn d-flex align-items-center"><svg class="ic"><use href="#i-trim"/></svg><span>修剪</span></div><span class="tsep"></span>
          <div class="tbtn d-flex align-items-center"><svg class="ic"><use href="#i-brk"/></svg><span>打断</span></div>
          <div class="tbtn d-flex align-items-center"><svg class="ic"><use href="#i-mrg"/></svg><span>合并</span></div>
          <div class="tbtn off d-flex align-items-center"><svg class="ic"><use href="#i-spl"/></svg><span>分割</span></div><span class="tsep"></span>
          <div class="tbtn d-flex align-items-center"><svg class="ic"><use href="#i-aln"/></svg><span>对齐</span></div><div class="tri-wrap tri-near"><span class="tri"></span></div>
          <div class="tbtn d-flex align-items-center"><svg class="ic"><use href="#i-off"/></svg><span>偏移</span></div>
          <div class="tbtn d-flex align-items-center"><svg class="ic"><use href="#i-str"/></svg><span>拉伸</span></div><span class="tsep"></span>
          <div class="tbtn off d-flex align-items-center"><svg class="ic"><use href="#i-grip"/></svg><span>设置夹点</span></div>
        </div>
      </div>
      <div class="bar-row d-flex work-bars">
        <div class="tgroup d-flex align-items-center gr-attr">
          <span class="tgrip"></span>
          <div class="combo-box cw59 d-flex align-items-center justify-content-between"><span class="combo-txt">第7层</span><span class="combo-arrow d-flex align-items-center justify-content-center"><span class="tri"></span></span></div>
          <div class="combo-box cw70 d-flex align-items-center justify-content-between"><span class="combo-txt">梁</span><span class="combo-arrow d-flex align-items-center justify-content-center"><span class="tri"></span></span></div>
          <div class="combo-box cw68 d-flex align-items-center justify-content-between"><span class="combo-txt">梁</span><span class="combo-arrow d-flex align-items-center justify-content-center"><span class="tri"></span></span></div>
          <div class="combo-box cw70 d-flex align-items-center justify-content-between"><span class="combo-txt">KL-1</span><span class="combo-arrow d-flex align-items-center justify-content-center"><span class="tri"></span></span></div>
          <div class="combo-box cw70 d-flex align-items-center justify-content-between"><span class="combo-txt">分层1</span><span class="combo-arrow d-flex align-items-center justify-content-center"><span class="tri"></span></span></div>
          <span class="tsep"></span>
          <div class="tbtn d-flex align-items-center"><svg class="ic"><use href="#i-prop"/></svg><span>属性</span></div>
          <div class="tbtn d-flex align-items-center"><svg class="ic"><use href="#i-edit"/></svg><span>编辑钢筋</span></div>
          <div class="tbtn d-flex align-items-center"><svg class="ic"><use href="#i-list"/></svg><span>构件列表</span></div>
          <div class="tbtn d-flex align-items-center"><svg class="ic"><use href="#i-pick"/></svg><span>拾取构件</span></div>
          <span class="tgrip tgrip-mid"></span>
          <div class="tbtn d-flex align-items-center"><svg class="ic"><use href="#i-two"/></svg><span>两点</span></div>
          <div class="tbtn d-flex align-items-center"><svg class="ic"><use href="#i-par"/></svg><span>平行</span></div>
          <div class="tbtn d-flex align-items-center"><svg class="ic"><use href="#i-ang"/></svg><span>点角</span></div>
          <div class="tri-wrap"><span class="tri"></span></div>
          <div class="tbtn on d-flex align-items-center"><svg class="ic"><use href="#i-aux"/></svg><span>三点辅轴</span></div>
          <div class="tbtn on tri-on d-flex align-items-center"><span class="tri"></span></div>
          <div class="tbtn d-flex align-items-center"><svg class="ic"><use href="#i-broom"/></svg><span>删除辅轴</span></div>
          <div class="tbtn d-flex align-items-center"><svg class="ic"><use href="#i-dim"/></svg><span>尺寸标注</span></div>
          <div class="tri-wrap"><span class="tri"></span></div>
        </div>
      </div>
      <div class="bar-row d-flex work-bars">
        <div class="tgroup d-flex align-items-center gr-draw">
          <span class="tgrip"></span>
          <div class="tbtn d-flex align-items-center"><svg class="ic"><use href="#i-arrow"/></svg><span>选择</span></div><div class="tri-wrap"><span class="tri"></span></div><span class="tsep"></span>
          <div class="tbtn d-flex align-items-center"><svg class="ic"><use href="#i-line"/></svg><span>直线</span></div>
          <div class="tbtn d-flex align-items-center"><svg class="ic"><use href="#i-plus"/></svg><span>点加长度</span></div>
          <div class="tbtn d-flex align-items-center"><svg class="ic"><use href="#i-arc"/></svg><span>三点画弧</span></div><div class="tri-wrap"><span class="tri"></span></div>
          <div class="combo-box cw55 d-flex align-items-center justify-content-end"><span class="combo-arrow d-flex align-items-center justify-content-center"><span class="tri"></span></span></div>
          <div class="tbtn d-flex align-items-center"><svg class="ic"><use href="#i-rect"/></svg><span>矩形</span></div><span class="tsep"></span>
          <div class="tbtn d-flex align-items-center"><svg class="ic"><use href="#i-smart"/></svg><span>智能布置</span></div><div class="tri-wrap tri-near"><span class="tri"></span></div><span class="tsep"></span>
          <div class="tbtn d-flex align-items-center"><svg class="ic"><use href="#i-funnel"/></svg><span>修改梁段属性</span></div>
          <div class="tbtn d-flex align-items-center"><svg class="ic"><use href="#i-insitu"/></svg><span>原位标注</span></div><div class="tri-wrap"><span class="tri"></span></div>
          <div class="tbtn d-flex align-items-center"><svg class="ic"><use href="#i-redo"/></svg><span>重提梁跨</span></div><div class="tri-wrap"><span class="tri"></span></div>
          <div class="tbtn d-flex align-items-center"><svg class="ic"><use href="#i-brush"/></svg><span>梁跨数据复制</span></div><div class="tri-wrap"><span class="tri"></span></div>
          <div class="tbtn d-flex align-items-center"><svg class="ic"><use href="#i-batid"/></svg><span>批量识别梁支座</span></div>
          <span class="more">»</span>
        </div>
        <div class="tgroup gr-tail d-flex align-items-center"><span class="tgrip"></span><span class="tail-white"></span></div>
      </div>

      <!-- 3D view -->
      <div class="view-wrap position-relative">
        <svg class="view-svg" viewBox="259 168 1107 507" shape-rendering="crispEdges">
          <g fill="none" stroke="#008000">
            <path d="M260 243L517 222M260 343L514 322M453 168L513 345M485 340L514 318M863 317L890 393M860 335L885 317M896 340L912 330M775 350L825 318M628 348L912 325M800 325L820 404"/>
            <path d="M444 181l5-9 8-4 8 1 7 7 2 8-3 8-7 5h-9l-7-5-4-7zM260 443l5-9 8-4 9 3 5 8-1 9-6 7-8 2-8-3-4-7zM259 604l5-9 8-4 9 3 5 8-1 9-6 7-8 2-8-3-4-7z"/>
          </g>
          <g fill="none" stroke="#e00000">
            <path d="M260 445L315 440M622 415L913 392M260 604L293 603M545 435L561 481M614 635L628 675M826 420L862 523M893 613L913 675M890 393L933 517M965 608L988 675M944 400L960 448M1013 603L1038 675"/>
          </g>
          <polygon points="912,312 932,312 930,403 920,405 912,380" fill="#5a00b0"/>
          <polygon points="912,312 922,312 920,405 912,380" fill="#48009a"/>
          <polygon points="938,316 963,327 961,418 935,420" fill="#b0b000"/>
          <polygon points="932,314 938,316 935,420 930,405" fill="#9a9a00"/>
          <polygon points="963,327 972,327 968,515 958,515" fill="#48009a"/>
          <polygon points="518,168 531,168 530,208 520,416 523,437 517,430 512,416" fill="#48009a"/>
          <polygon points="530,208 566,348 566,433 523,437 520,416" fill="#5a00b0"/>
          <polygon points="531,168 540,168 575,256 568,258 566,348 530,208" fill="#00a400"/>
          <polygon points="540,168 546,168 576,256 570,256" fill="#00e600"/>
          <polygon points="546,168 577,168 605,255 576,257" fill="#00008c"/>
          <polygon points="577,168 584,168 612,255 605,255" fill="#00e600"/>
          <polygon points="584,168 950,168 968,226 612,255" fill="#afafaf"/>
          <polygon points="950,168 995,168 1012,222 967,227" fill="#00e600"/>
          <polygon points="612,255 968,226 975,250 625,278" fill="#00e600"/>
          <polygon points="625,278 973,250 972,327 923,312 860,316 672,330 623,355" fill="#00a800"/>
          <polygon points="568,258 576,284 568,548 559,548" fill="#48009a"/>
          <polygon points="576,284 625,280 618,545 568,548" fill="#5a00b0"/>
          <polygon points="568,258 617,254 625,280 576,284" fill="#7500e0"/>
          <polygon points="974,250 1023,247 1017,516 968,516" fill="#5a00b0"/>
          <polygon points="967,226 1012,222 1023,247 974,250" fill="#7500e0"/>
          <polygon points="291,569 1088,506 1093,521 296,586 290,583" fill="#00008c"/>
          <polygon points="297,585 1095,521 1099,534 302,597" fill="#00e600"/>
          <polygon points="296,586 302,597 298,659 295,650" fill="#009c00"/>
          <polygon points="302,597 1099,534 1097,597 298,660" fill="#00b000"/>
          <g fill="none" stroke="#fff" stroke-width="2">
            <path d="M315 440L540 422M339 438L386 575M363 577L588 560"/>
            <path d="M329 434L348 442M376 572L397 579" stroke-width="1.400"/>
          </g>
          <g shape-rendering="auto">
            <path d="M313 625V590" stroke="#0a8cff" stroke-width="3.400"/><path d="M313 582l4 9h-8z" fill="#0a8cff"/>
            <path d="M312 625l-6-22" stroke="#00ff44" stroke-width="2.400"/>
            <path d="M314 625l35-4" stroke="#ff0000" stroke-width="3"/><path d="M362 620l-13-5v9z" fill="#ff0000"/>
            <circle cx="812" cy="421" r="225" fill="none" stroke="#fff" stroke-opacity=".52"/>
            <g fill="none" stroke="#fff" stroke-opacity=".52">
              <circle cx="812" cy="196" r="14"/><circle cx="587" cy="421" r="14"/><circle cx="1037" cy="421" r="14"/><circle cx="812" cy="646" r="14"/>
            </g>
            <g font-family="Liberation Sans, sans-serif" font-size="15" fill="#d0d0d0">
              <text x="302" y="377">3300</text>
              <text x="700" y="346" font-size="16">3300</text>
              <text x="820" y="337" transform="rotate(-4 820 337)">600</text>
              <text x="880" y="332" transform="rotate(-4 880 332)">400</text>
              <text transform="translate(344 525) rotate(-90)">2100</text>
              <text x="452" y="186" font-size="13">7</text>
              <text x="268" y="448" font-size="13">E</text>
              <text x="267" y="609" font-size="13">D</text>
            </g>
            <text x="302" y="589" font-family="Liberation Sans, sans-serif" font-size="10" fill="#0a8cff">Z</text>
            <text x="318" y="607" font-family="Liberation Sans, sans-serif" font-size="10" fill="#00c040">Y</text>
            <text x="349" y="618" font-family="Liberation Sans, sans-serif" font-size="10" fill="#e00000">X</text>
          </g>
        </svg>
        <!-- sogou ime bar over the view -->
        <div class="ime-bar position-absolute d-flex">
          <svg class="ime-logo" viewBox="0 0 30 27"><rect x="2" y="1.500" width="26" height="24" rx="3" fill="#f0501e" transform="rotate(-7 15 13)"/><text x="15" y="21" text-anchor="middle" font-family="Liberation Sans, sans-serif" font-weight="700" font-size="23" fill="#fff">S</text></svg>
          <div class="ime-body d-flex align-items-center">
            <b>中</b><b class="ime-comma">°,</b>
            <svg class="ic" viewBox="0 0 17 17"><circle cx="8.500" cy="8.500" r="7.300" fill="none" stroke="#1f74c4" stroke-width="1.600"/><circle cx="6" cy="7" r="1" fill="#1f74c4"/><circle cx="11" cy="7" r="1" fill="#1f74c4"/><path d="M5 10.500c2 2.500 5 2.500 7 0" fill="none" stroke="#1f74c4" stroke-width="1.300"/></svg>
            <svg class="ic" viewBox="0 0 17 17"><rect x="6" y="1" width="5" height="10" rx="2.500" fill="#1f74c4"/><path d="M3.500 7c0 7 10 7 10 0M8.500 13v3M5.500 16h6" fill="none" stroke="#1f74c4" stroke-width="1.300"/></svg>
            <svg class="ic" viewBox="0 0 17 17"><rect x="0" y="3" width="17" height="11" rx="1.500" fill="#1f74c4"/><path d="M2 6h13M2 8.500h13" stroke="#fff" stroke-dasharray="1.500 1"/><path d="M5 11.500h7" stroke="#fff" stroke-width="1.200"/></svg>
            <svg class="ic" viewBox="0 0 17 17"><circle cx="6" cy="4" r="3" fill="#bcc8d8"/><path d="M1 12c0-3 3-4 5-4s4 1 5 2v3H1z" fill="#bcc8d8"/><rect x="6" y="10" width="10" height="6" fill="#fff" stroke="#bcc8d8"/></svg>
            <svg class="ic" viewBox="0 0 17 17"><path d="M5 2l3.500 1L12 2l5 3-2 3-2-1v8H4V7L2 8 0 5z" fill="#1f74c4"/></svg>
            <svg class="ic" viewBox="0 0 17 17"><path d="M16 4l-3 3-2-2 3-3a4.500 4.500 0 0 0-6 5l-6 6c-1 2 1 4 3 3l6-6a4.500 4.500 0 0 0 5-6z" fill="#1f74c4"/></svg>
          </div>
        </div>
      </div>

      <!-- snap bar -->
      <div class="snap-row d-flex">
        <div class="tgroup snap-a d-flex align-items-center">
          <span class="tgrip"></span>
          <div class="tbtn d-flex align-items-center"><svg class="ic"><use href="#i-x"/></svg><span>交点</span></div>
          <div class="tbtn snap-on d-flex align-items-center"><svg class="ic"><use href="#i-perp"/></svg><span>垂点</span></div>
          <div class="tbtn snap-on d-flex align-items-center"><svg class="ic"><use href="#i-midp"/></svg><span>中点</span></div>
          <div class="tbtn d-flex align-items-center"><svg class="ic"><use href="#i-pent"/></svg><span>顶点</span></div>
          <div class="tbtn d-flex align-items-center"><svg class="ic"><use href="#i-coord"/></svg><span>坐标</span></div>
        </div>
        <div class="tgroup snap-b d-flex align-items-center flex-grow-1">
          <span class="tgrip"></span>
          <div class="combo-box cw58 d-flex align-items-center justify-content-between"><span class="combo-txt">不偏移</span><span class="combo-arrow d-flex align-items-center justify-content-center"><span class="tri"></span></span></div>
          <span class="tsep"></span>
          <span class="gray-txt ml2">X=</span>
          <div class="num-box nb58 ml3">0<span class="spin-up"></span><span class="spin-dn"></span></div>
          <span class="gray-txt ml2">mm</span>
          <span class="gray-txt ml5">Y=</span>
          <div class="num-box nb56 ml2">0<span class="spin-up"></span><span class="spin-dn"></span></div>
          <span class="gray-txt ml3">mm</span>
          <span class="chk-box ml8"></span>
          <span class="ml10 gray-txt">旋转</span>
          <div class="num-box nb68 ml4">0.000<span class="spin-up"></span><span class="spin-dn"></span></div>
          <span class="gray-txt ml4">°</span>
        </div>
      </div>
    </div>
  </div>

  <!-- status bar -->
  <div class="stat-row d-flex">
    <div class="stat-cell sc1">X=35107 Y=3201</div>
    <div class="stat-cell sc2"><span>层高:</span>2.8m</div>
    <div class="stat-cell sc3"><span>底标高:</span>20.35m</div>
    <div class="stat-cell sc4">0</div>
    <div class="stat-cell sc5"></div>
    <div class="stat-cell sc6">403.6 FPS</div>
  </div>

  <!-- windows taskbar -->
  <div class="task-row d-flex align-items-center">
    <div class="start-btn h-100 d-flex align-items-center justify-content-center">
      <svg class="ic" viewBox="0 0 16 16"><path d="M0 2.300l6.600-.9v6.300H0zM7.400 1.300L16 0v7.700H7.400zM0 8.400h6.600v6.300L0 13.800zM7.400 8.400H16V16l-8.600-1.200z" fill="#fff"/></svg>
    </div>
    <div class="search-box h-100 d-flex align-items-center">
      <svg width="22" height="22" viewBox="0 0 20 20"><circle cx="10" cy="10" r="8.500" fill="none" stroke="#e4e4e4" stroke-width="2.400"/></svg>
      <span class="search-txt flex-grow-1">在这里输入你要搜索的内容</span>
      <svg class="me-3" width="12" height="20" viewBox="0 0 12 20"><rect x="3" y="1" width="6" height="12" rx="3" fill="none" stroke="#8b8b8b"/><path d="M1 8c0 7 10 7 10 0M6 14v4M3 18.500h6" fill="none" stroke="#8b8b8b"/></svg>
    </div>
    <div class="tb-slot tb-wide d-flex align-items-center justify-content-center"><svg class="ic" viewBox="0 0 26 26"><path d="M8.500 4.500h9v17h-9zM6 7.500H4v11h2M20 7.500h2v11h-2" fill="none" stroke="#fff" stroke-width="1.300"/></svg></div>
    <div class="tb-slot tb-wide d-flex align-items-center justify-content-center"><svg class="ic" viewBox="0 0 26 26"><g fill="#e8e8e8"><path d="M12 12C5 13 2 9 3 5c1-3 6-4 8-2 2 2 2 6 1 9z"/><path d="M14 12C13 5 17 2 21 3c3 1 4 6 2 8-2 2-6 2-9 1z"/><path d="M14 14c7-1 10 3 9 7-1 3-6 4-8 2-2-2-2-6-1-9z"/><path d="M12 14c1 7-3 10-7 9-3-1-4-6-2-8 2-2 6-2 9-1z"/></g></svg></div>
    <div class="tb-slot tb-wide d-flex align-items-center justify-content-center"><svg class="ic" viewBox="0 0 26 26"><ellipse cx="13" cy="13" rx="12" ry="5" fill="none" stroke="#ddd" transform="rotate(-45 13 13)"/><text x="13" y="20" text-anchor="middle" font-family="Liberation Sans, sans-serif" font-weight="700" font-size="24" fill="#f0f0f0">e</text></svg></div>
    <div class="tb-slot tb-wide d-flex align-items-center justify-content-center"><svg class="ic" viewBox="0 0 26 26"><g fill="none" stroke="#bdbdbd" stroke-width="1.500"><path d="M20 4C11 1 3 7 4 14c1 7 9 10 14 7 5-3 4-11-2-12-5-1-8 3-6 7 2 3 6 2 6-1"/></g></svg></div>
    <div class="tb-slot tb-gap d-flex align-items-center justify-content-center"><svg class="ic" viewBox="0 0 26 26"><text x="13" y="20" text-anchor="middle" font-family="Liberation Sans, sans-serif" font-weight="700" font-size="26" fill="#0a78d7">e</text></svg></div>
    <div class="tb-slot d-flex align-items-center justify-content-center"><svg class="ic" viewBox="0 0 26 26"><text x="13" y="20" text-anchor="middle" font-family="Liberation Sans, sans-serif" font-weight="700" font-size="25" fill="#3a9ee8">e</text><ellipse cx="13" cy="13" rx="12.500" ry="5.500" fill="none" stroke="#f0c030" stroke-width="1.500" transform="rotate(-45 13 13)"/></svg></div>
    <div class="tb-slot run d-flex align-items-center justify-content-center"><svg class="ic" viewBox="0 0 26 26"><path d="M2 4h9l2 3h11v15H2z" fill="#f8d573"/><path d="M2 11h22v11H2z" fill="#fbe7a8"/><path d="M8 15h10v7H8z" fill="#3aa0e0"/></svg></div>
    <div class="tb-slot run d-flex align-items-center justify-content-center"><svg class="ic" viewBox="0 0 26 26"><text x="13" y="22" text-anchor="middle" font-family="Liberation Sans, sans-serif" font-weight="700" font-size="26" fill="#1590ee">G</text></svg></div>
    <div class="tb-slot run act d-flex align-items-center justify-content-center"><svg class="ic"><use href="#i-app"/></svg></div>
    <div class="tb-slot run d-flex align-items-center justify-content-center"><svg class="ic" viewBox="0 0 26 26"><circle cx="13" cy="14" r="11.500" fill="#72c03a" stroke="#e8f4d8"/><text x="13" y="20" text-anchor="middle" font-family="Liberation Sans, sans-serif" font-weight="700" font-size="20" fill="#fff">e</text><path d="M13 2c3-2 6-1 7 0" stroke="#3a9a2a" stroke-width="1.500" fill="none"/></svg></div>
    <div class="tb-slot run d-flex align-items-center justify-content-center"><svg class="ic" viewBox="0 0 26 26"><rect x="1" y="1" width="24" height="24" rx="2" fill="#f0951e"/><path d="M5 7l12-2 3 15-12 2z" fill="#fff4d8" stroke="#b96a10"/><path d="M8 11h7M8 14h7M9 17h6" stroke="#8a6a30"/><path d="M17 12l6-10 2 1-6 10z" fill="#c83a1a"/></svg></div>
    <div class="ms-auto d-flex align-items-center h-100">
      <span class="mr9">链接</span>
      <svg class="tray-ic mr6" viewBox="0 0 18 18"><path d="M3 12l6-6 6 6" fill="none" stroke="#eee" stroke-width="1.200"/></svg>
      <svg class="tray-ic mr7" viewBox="0 0 18 18"><path d="M4 1v3M7 1v3M2 4h7v3H2zM5 7v7" stroke="#fff" fill="none"/><rect x="6" y="7" width="10" height="8" fill="#ddd" stroke="#fff"/></svg>
      <svg class="tray-ic mr30" viewBox="0 0 18 18"><g fill="none" stroke="#eee" stroke-dasharray="1.500 1"><path d="M1 9a13 13 0 0 1 15-6M3 12a9 9 0 0 1 10-5M6 14a5 5 0 0 1 6-3"/></g><rect x="13" y="13" width="3" height="3" fill="#eee"/></svg>
      <svg class="mr11" width="22" height="16" viewBox="0 0 24 18"><rect x=".5" y="1.500" width="23" height="15" fill="none" stroke="#fff"/><path d="M3 5h18M3 8h18" stroke="#fff" stroke-dasharray="1.500 1"/><path d="M6 12h12" stroke="#fff"/></svg>
      <span class="mr13">中</span>
      <svg class="tray-ic mr16" viewBox="0 0 18 18"><rect x="2" y="1" width="14" height="16" rx="2" fill="#ef4a1e" transform="rotate(-8 9 9)"/><text x="9" y="14" text-anchor="middle" font-family="Liberation Sans, sans-serif" font-weight="700" font-size="14" fill="#fff">S</text></svg>
      <div class="clock-box flex-column d-flex"><span>15:45</span><span>2018/6/4</span></div>
      <div class="note-box d-flex align-items-center justify-content-center"><svg width="18" height="18" viewBox="0 0 18 18"><path d="M2 2h14v11h-5l-2 3-2-3H2z" fill="none" stroke="#fff" stroke-width="1.200"/></svg></div>
    </div>
  </div>
</div>
</body>
</html>
